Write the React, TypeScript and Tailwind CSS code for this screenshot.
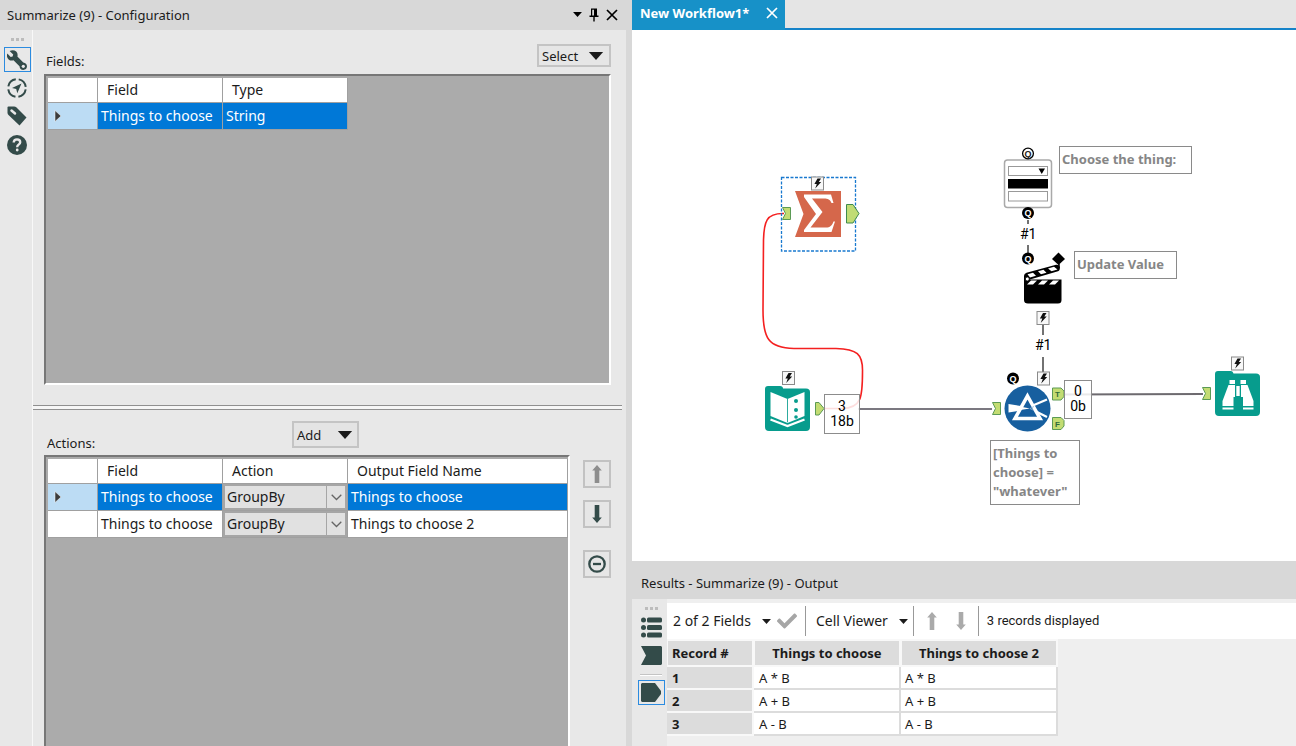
import React from "react";
import { FaCheck } from "react-icons/fa";

const dark = "#334b49";

function Caret({ className = "" }: { className?: string }) {
  return (
    <svg viewBox="0 0 16 9" className={className} aria-hidden="true">
      <path d="M0 0H16L8 9Z" fill="currentColor" />
    </svg>
  );
}

function BlockArrow({ down = false, className = "" }: { down?: boolean; className?: string }) {
  return (
    <svg viewBox="0 0 12 20" className={className} aria-hidden="true">
      <path
        d={down ? "M3.700 1H8.300V13.500H10.800L6 19L1.200 13.500H3.700Z" : "M3.700 19H8.300V6.500H10.800L6 1L1.200 6.500H3.700Z"}
        fill="currentColor"
      />
    </svg>
  );
}

function Grip() {
  return (
    <span className="flex gap-[2px]" aria-hidden="true">
      <i className="size-[3px] bg-[#bcbcbc]" />
      <i className="size-[3px] bg-[#bcbcbc]" />
      <i className="size-[3px] bg-[#bcbcbc]" />
    </span>
  );
}

/* Drawing primitives for the workflow tools */

function Bolt({ x, y }: { x: number; y: number }) {
  return (
    <g transform={`translate(${x} ${y})`}>
      <rect x="0.5" y="0.5" width="12" height="13" fill="#f8f8f8" stroke="#8a8a8a" />
      <path d="M6.5 2H10L7.8 5.4H10.2L4.2 12L5.8 7.4H3.4Z" fill="#111" />
    </g>
  );
}

function QDot({ x, y, hollow = false }: { x: number; y: number; hollow?: boolean }) {
  return (
    <g transform={`translate(${x} ${y})`}>
      <circle r={hollow ? 5.4 : 6} fill={hollow ? "#fff" : "#000"} stroke="#000" strokeWidth={hollow ? 1.3 : 0} />
      <text
        y="3"
        textAnchor="middle"
        fontSize="9"
        fontWeight="700"
        fontFamily="Liberation Sans, sans-serif"
        fill={hollow ? "#222" : "#fff"}
      >
        Q
      </text>
    </g>
  );
}

function InAnchor({ x, y }: { x: number; y: number }) {
  return (
    <path
      transform={`translate(${x} ${y})`}
      d="M0.5 0.5H8.5V12.5H0.5L3.5 6.5Z"
      fill="#c3dc72"
      stroke="#5c9a55"
    />
  );
}

function OutAnchor({ x, y, label }: { x: number; y: number; label: string }) {
  return (
    <g transform={`translate(${x} ${y})`}>
      <path d="M0.5 0.5H9L12 3.5V9L9 12.5H0.5Z" fill="#c3dc72" stroke="#5c9a55" />
      <text x="5.5" y="9.5" textAnchor="middle" fontSize="8" fontWeight="700" fontFamily="Liberation Sans, sans-serif" fill="#2f6b3a">
        {label}
      </text>
    </g>
  );
}

function Connectors() {
  return (
    <svg viewBox="632 30 664 531" className="absolute left-0 top-0 h-[531px] w-[664px]" fill="none" aria-hidden="true">
      <path d="M858 409H992" stroke="#7b7880" strokeWidth="2" />
      <path d="M1064 394.500L1203 394" stroke="#6d6a6f" strokeWidth="2" />
      <path d="M1028 220V224M1028 245V253M1043 325V335M1043 357V372" stroke="#444" strokeWidth="1.500" />
      <path
        d="M784 213.500C766 213 764 222 763.500 240L763 310C763 338 768 348 794 348.500H836C857 349 863 354 862.500 372C862.500 396 862 408 842 408.500H824"
        stroke="#f42020"
        strokeWidth="1.600"
      />
    </svg>
  );
}

function SummarizeTool() {
  return (
    <svg viewBox="780 176 82 77" className="absolute left-[148px] top-[146px] h-[77px] w-[82px]" role="img" aria-label="Summarize">
      <rect x="781.5" y="177.500" width="74" height="73.500" fill="none" stroke="#1879cf" strokeWidth="1.300" strokeDasharray="3 1.500" />
      <path d="M795 191H841V237H795L803.500 214Z" fill="#d5674b" />
      <path
        d="M804 194.500H831L833.500 203H831.500C830 199.500 828 198.500 824 198.500H812L822.500 212L810.500 227.500H826C830 227.500 832 225.500 833.500 221.500H835L831.500 232H804V230L816 214L804 197Z"
        fill="#fff"
      />
      <Bolt x={811} y={176.5} />
      <InAnchor x={782} y={207} />
      <path d="M846.500 204.500H853L859 213.500L853 223H846.500Z" fill="#c0dc74" stroke="#3f8a4e" />
    </svg>
  );
}

function TextInputTool() {
  return (
    <svg viewBox="764 370 62 63" className="absolute left-[132px] top-[340px] h-[63px] w-[62px]" role="img" aria-label="Text Input">
      <path d="M768 386H780Q783 386 783 388.500H806Q810 388.500 810 392V427Q810 431 806 431H769Q765 431 765 427V389Q765 386 768 386Z" fill="#079c8d" />
      <path d="M770.500 392L787.500 399V423L770.500 416Z" fill="#fff" />
      <path d="M804.500 392L787.500 399V423L804.500 416Z" fill="#fff" />
      <path d="M787.500 399V422" stroke="#079c8d" strokeWidth="0.800" />
      <path d="M770.500 417.500L787.500 424.500L804.500 417.500" fill="none" stroke="#079c8d" strokeWidth="1.200" />
      <path d="M770.500 419.500L787.500 426L804.500 419.500" fill="none" stroke="#fff" strokeWidth="2.200" />
      <circle cx="796" cy="401" r="2" fill="#079c8d" />
      <circle cx="796" cy="410" r="2" fill="#079c8d" />
      <circle cx="796" cy="417" r="1.800" fill="#079c8d" />
      <Bolt x={782} y={371} />
      <path d="M815.500 402.500H819L824 408.500L819 415H815.500Z" fill="#c3dc72" stroke="#5c9a55" />
    </svg>
  );
}

function DropDownTool() {
  return (
    <svg viewBox="1000 146 56 76" className="absolute left-[368px] top-[116px] h-[76px] w-[56px]" role="img" aria-label="Drop Down">
      <rect x="1004.500" y="160" width="47" height="47.500" rx="3" fill="#fff" stroke="#a9a9a9" strokeWidth="1.500" />
      <rect x="1008.500" y="166.500" width="39" height="9" fill="#fff" stroke="#999" />
      <path d="M1038.500 168.500H1045L1041.750 174Z" fill="#000" />
      <rect x="1008" y="179" width="40" height="9.500" fill="#000" />
      <rect x="1008.500" y="191.500" width="39" height="9.500" fill="#fff" stroke="#999" />
      <QDot x={1028} y={153.500} hollow />
      <QDot x={1028} y={213} />
    </svg>
  );
}

function ActionTool() {
  return (
    <svg viewBox="1018 250 50 78" className="absolute left-[386px] top-[220px] h-[78px] w-[50px]" role="img" aria-label="Action">
      <QDot x={1028} y={258.500} />
      <path d="M1058.500 252.500L1065 259L1058.500 265L1052 259Z" fill="#000" />
      <path d="M1024 280V276Q1024 273.500 1026.500 272.700L1056 264.700Q1059 264.300 1059.800 267Q1060.300 270.500 1058 271.200L1030 279.500V282H1024Z" fill="#000" />
      <path d="M1027.500 274.200L1033 272.700L1036 275.800L1030 277.400ZM1038 271.300L1043.500 269.700L1046.500 272.700L1041 274.300ZM1048 268.400L1054 266.700L1057.500 269.600L1051.500 271.200Z" fill="#fff" />
      <path d="M1059 264V268" stroke="#000" strokeWidth="1.500" />
      <path d="M1024 279.500H1061.500V300Q1061.500 303.500 1058 303.500H1028Q1024 303.500 1024 300Z" fill="#000" />
      <path d="M1031 280.500H1037L1033 284.500H1027ZM1042 280.500H1048L1044 284.500H1038ZM1053 280.500H1059L1055 284.500H1049Z" fill="#fff" />
      <circle cx="1027.300" cy="279" r="2" fill="#fff" stroke="#000" strokeWidth="0.800" />
      <Bolt x={1036.5} y={311} />
    </svg>
  );
}

function FilterTool() {
  return (
    <svg viewBox="990 370 76 64" className="absolute left-[358px] top-[340px] h-[64px] w-[76px]" role="img" aria-label="Filter">
      <circle cx="1027.500" cy="408.500" r="23" fill="#175f9f" />
      <path d="M1008.500 404V412.500L1030 409V407.500Z" fill="#fff" />
      <path d="M1034 405L1047 399.500M1035 411L1047 417" stroke="#fff" strokeWidth="2.200" />
      <path d="M1027.500 396L1040 418.500H1015Z" fill="#175f9f" stroke="#fff" strokeWidth="3.600" />
      <path d="M1017 406L1030 408.500L1017 410.500Z" fill="#fff" />
      <path d="M1030 408.500L1034 406.500M1030 408.500L1034 410.500" stroke="#8db4d6" strokeWidth="0.800" />
      <QDot x={1013} y={378.500} />
      <Bolt x={1037} y={371.500} />
      <InAnchor x={992} y={402} />
      <OutAnchor x={1052} y={387.500} label="T" />
      <OutAnchor x={1052} y={417} label="F" />
    </svg>
  );
}

function BrowseTool() {
  return (
    <svg viewBox="1200 355 62 63" className="absolute left-[568px] top-[325px] h-[63px] w-[62px]" role="img" aria-label="Browse">
      <path d="M1218 371H1231Q1233 371 1233.500 373.500H1256Q1260 373.500 1260 377V412Q1260 416 1256 416H1219Q1215 416 1215 412V374Q1215 371 1218 371Z" fill="#079c8d" />
      <path d="M1229.500 380H1235V384H1229.500ZM1240.500 380H1246V384H1240.500Z" fill="#fff" />
      <path d="M1228.500 385H1235V397H1233.500V406H1222.500V401Z" fill="#fff" />
      <path d="M1247.500 385H1241V397H1243V406H1253.500V401Z" fill="#fff" />
      <rect x="1236.300" y="386" width="3.400" height="10" fill="#fff" />
      <path d="M1222.500 408.500H1233.500M1243 408.500H1253.500" stroke="#fff" strokeWidth="2" />
      <Bolt x={1231} y={356.500} />
      <InAnchor x={1202} y={387} />
    </svg>
  );
}

function Note({ className, children }: { className: string; children: React.ReactNode }) {
  return (
    <p className={`absolute border border-[#8a8a8a] bg-white px-[2px] pt-[3px] text-[13px] font-bold leading-[19px] text-[#868686] ${className}`}>
      {children}
    </p>
  );
}

function Count({ className, rows, size }: { className: string; rows: string; size: string }) {
  return (
    <p className={`absolute border border-[#8c8c8c] bg-white/85 text-center font-[Roboto,sans-serif] text-sm leading-[15px] text-black ${className}`}>
      {rows}
      <br />
      {size}
    </p>
  );
}

function Canvas() {
  return (
    <main className="relative min-h-0 flex-1 overflow-hidden bg-white">
      <Connectors />
      <SummarizeTool />
      <TextInputTool />
      <DropDownTool />
      <ActionTool />
      <FilterTool />
      <BrowseTool />
      <Count className="left-[192px] top-[364px] h-[40px] w-[36px] pt-[4px]" rows="3" size="18b" />
      <Count className="left-[432px] top-[350px] h-[39px] w-[28px] pt-[3px]" rows="0" size="0b" />
      <span className="absolute left-[388px] top-[195px] font-[Roboto,sans-serif] text-sm leading-[18px] text-black">#1</span>
      <span className="absolute left-[403px] top-[306px] font-[Roboto,sans-serif] text-sm leading-[18px] text-black">#1</span>
      <Note className="left-[427px] top-[116px] h-[28px] w-[133px]">Choose the thing:</Note>
      <Note className="left-[442px] top-[221px] h-[28px] w-[103px]">Update Value</Note>
      <Note className="left-[358px] top-[410px] h-[65px] w-[90px]">
        [Things to
        <br />
        choose] =
        <br />
        "whatever"
      </Note>
    </main>
  );
}

function RowMark() {
  return (
    <svg viewBox="0 0 8 12" className="ml-[6px] h-3 w-2" aria-hidden="true">
      <path d="M1 0.500L7 6L1 11.500Z" fill="#3c3c3c" stroke="#fff" strokeWidth="0.500" />
    </svg>
  );
}

const head = "border-b border-r border-[#a0a0a0] bg-white px-[9px] text-left font-normal";
const cell = "border-b border-r border-[#a0a0a0] px-[3px]";

function FieldsPane() {
  return (
    <section className="flex h-[375px] flex-none flex-col pb-[20px] pl-[11px] pr-[15px] pt-[14px]">
      <div className="flex h-[30px] items-start justify-between">
        <h2 className="pl-[2px] pt-[8px] leading-[18px]">Fields:</h2>
        <button className="flex h-[23px] w-[74px] items-center justify-between border-2 border-[#c4c4c4] bg-[#e6e6e6] pl-[3px] pr-[5px]">
          Select
          <Caret className="h-[8px] w-[16px]" />
        </button>
      </div>
      <div className="flex-1 border-b-2 border-l-2 border-r-2 border-t-2 border-b-white border-l-[#777] border-r-white border-t-[#777] bg-[#ababab] pl-[2px] pt-[2px]">
        <table className="table-fixed border-separate border-spacing-0 text-sm leading-[18px]">
          <colgroup>
            <col className="w-[50px]" />
            <col className="w-[125px]" />
            <col className="w-[125px]" />
          </colgroup>
          <thead>
            <tr className="h-[25px]">
              <th className={head} aria-label="Selected row" />
              <th className={head}>Field</th>
              <th className={head}>Type</th>
            </tr>
          </thead>
          <tbody>
            <tr className="h-[27px]">
              <td className="border-b border-r border-[#a0a0a0] bg-[#bcdcf4]"><RowMark /></td>
              <td className={`${cell} bg-[#0078d7] text-white`}>Things to choose</td>
              <td className={`${cell} bg-[#0078d7] text-white`}>String</td>
            </tr>
          </tbody>
        </table>
      </div>
    </section>
  );
}

const actionRows = [
  { field: "Things to choose", action: "GroupBy", output: "Things to choose", selected: true },
  { field: "Things to choose", action: "GroupBy", output: "Things to choose 2", selected: false },
];

const sideButton = "flex size-[28px] items-center justify-center border-2 border-[#c2c2c2] bg-[#e6e6e6]";

function ActionsPane() {
  return (
    <section className="flex min-h-0 flex-1 flex-col pl-[11px] pr-[15px] pt-[11px]">
      <div className="flex h-[34px] flex-none items-start">
        <h2 className="w-[248px] pl-[3px] pt-[13px] leading-[18px]">Actions:</h2>
        <button className="flex h-[27px] w-[67px] items-center justify-between border-2 border-[#c4c4c4] bg-[#e4e4e4] pl-[3px] pr-[4px]">
          Add
          <Caret className="h-[8px] w-[16px]" />
        </button>
      </div>
      <div className="flex min-h-0 flex-1 justify-between">
        <div className="w-[526px] border-l-2 border-r-2 border-t-2 border-l-[#777] border-r-white border-t-[#777] bg-[#ababab] pl-[2px] pt-[2px]">
          <table className="w-full table-fixed border-separate border-spacing-0 text-sm leading-[18px]">
            <colgroup>
              <col className="w-[50px]" />
              <col className="w-[125px]" />
              <col className="w-[125px]" />
              <col />
            </colgroup>
            <thead>
              <tr className="h-[25px]">
                <th className={head} aria-label="Selected row" />
                <th className={head}>Field</th>
                <th className={head}>Action</th>
                <th className={head}>Output Field Name</th>
              </tr>
            </thead>
            <tbody>
              {actionRows.map((row) => {
                const tone = row.selected ? "bg-[#0078d7] text-white" : "bg-white";
                return (
                  <tr key={row.output} className="h-[27px]">
                    <td className={`border-b border-r border-[#a0a0a0] ${row.selected ? "bg-[#bcdcf4]" : "bg-white"}`}>
                      {row.selected && <RowMark />}
                    </td>
                    <td className={`${cell} ${tone}`}>{row.field}</td>
                    <td className="border-b border-r border-[#a0a0a0] bg-[#e1e1e1] p-0">
                      <div className="relative h-[26px] border-2 border-[#a6a6a6]">
                        <select
                          aria-label={`Action for ${row.output}`}
                          defaultValue={row.action}
                          className="block h-full w-full appearance-none bg-transparent pl-[2px]"
                        >
                          <option>GroupBy</option>
                        </select>
                        <span className="pointer-events-none absolute inset-y-0 right-0 flex w-[19px] items-center justify-center border-l border-[#a6a6a6]">
                          <svg viewBox="0 0 11 7" className="h-[7px] w-[11px]" fill="none" aria-hidden="true">
                            <path d="M0.700 0.700L5.500 5.500L10.300 0.700" stroke="#666" strokeWidth="1.300" />
                          </svg>
                        </span>
                      </div>
                    </td>
                    <td className={`${cell} ${tone}`}>{row.output}</td>
                  </tr>
                );
              })}
            </tbody>
          </table>
        </div>
        <div className="flex flex-col gap-[12px] pt-[5px]">
          <button aria-label="Move up" className={`${sideButton} text-[#8d8d8d]`}>
            <BlockArrow className="h-[20px] w-[12px]" />
          </button>
          <button aria-label="Move down" className={`${sideButton} text-[#334b49]`}>
            <BlockArrow down className="h-[20px] w-[12px]" />
          </button>
          <button aria-label="Remove" className={`${sideButton} mt-[10px]`}>
            <svg viewBox="0 0 18 18" className="size-[18px]" fill="none" stroke={dark} strokeWidth="2.300">
              <circle cx="9" cy="9" r="7.700" />
              <path d="M5 9H13" />
            </svg>
          </button>
        </div>
      </div>
    </section>
  );
}

function ToolStrip() {
  return (
    <nav className="flex w-[33px] flex-none flex-col items-center border-r border-[#f8f8f8] pl-[2px] pt-[8px]">
      <Grip />
      <button aria-label="Configuration" className="mt-[6px] flex h-[25px] w-[27px] items-center justify-center border border-[#2b8be0]">
        <svg viewBox="0 0 20 20" className="size-[20px]">
          <path
            d="M2.600 0.900L6.200 4.500L5.600 6.600L3.700 7L0.300 3.600Q-0.800 7.200 1.600 9.400Q3.700 11.200 6.500 10.300L12.500 16.300Q12.800 19.800 16.300 20Q19.800 19.700 20 16.300Q19.700 12.900 16.300 12.500L10.400 6.600Q11.200 3.600 9.200 1.500Q6.500 -0.900 2.600 0.900Z"
            fill={dark}
          />
          <circle cx="16.300" cy="16.300" r="1.600" fill="#e8e8e8" />
        </svg>
      </button>
      <button aria-label="Navigation" className="mt-[6px]">
        <svg viewBox="0 0 20 20" className="size-[20px]" fill="none">
          <circle cx="10" cy="10" r="8.800" stroke={dark} strokeWidth="2" strokeDasharray="10.800 3.023" strokeDashoffset="-1.500" />
          <path d="M14.500 5.500L5 10L9.200 11L10.300 15.200Z" fill={dark} />
        </svg>
      </button>
      <button aria-label="Annotation" className="mt-[8px]">
        <svg viewBox="0 0 20 20" className="size-[20px]">
          <path d="M0.500 1.500Q0.500 0.500 1.500 0.500H7Q8.500 0.500 9.500 1.500L19.500 11.500L12.500 19.500L1.500 9Q0.500 8 0.500 6.500Z" fill={dark} />
          <path d="M4.500 4.500L8 7.500" stroke="#e8e8e8" strokeWidth="2.500" strokeLinecap="round" />
        </svg>
      </button>
      <button aria-label="Help" className="mt-[9px]">
        <svg viewBox="0 0 20 20" className="size-[20px]">
          <circle cx="10" cy="10" r="10" fill={dark} />
          <path d="M6.700 7.500Q6.900 4.400 10 4.400Q13.200 4.500 13.200 7.200Q13.200 8.800 11.500 9.800Q10.200 10.600 10.200 12.200" fill="none" stroke="#e8e8e8" strokeWidth="2.400" />
          <circle cx="10.200" cy="15" r="1.400" fill="#e8e8e8" />
        </svg>
      </button>
    </nav>
  );
}

function ConfigurationPanel() {
  return (
    <aside className="flex w-[626px] flex-none flex-col bg-[#e8e8e8]">
      <header className="flex h-[30px] flex-none items-center justify-between bg-[#d8d8d8] pb-px pl-[7px] pr-[8px]">
        <h1>Summarize (9) - Configuration</h1>
        <div className="flex items-center gap-[7px] text-black">
          <button aria-label="Window menu"><Caret className="h-[5px] w-[9px]" /></button>
          <button aria-label="Pin">
            <svg viewBox="0 0 10 14" className="h-[14px] w-[10px]">
              <path d="M2 0.500H8V7.500H9.500V9H5.700V13.500H4.300V9H0.500V7.500H2ZM3.200 1.700V7.500H5V1.700Z" fill="#000" fillRule="evenodd" />
            </svg>
          </button>
          <button aria-label="Close panel">
            <svg viewBox="0 0 12 12" className="size-[12px]">
              <path d="M1 1L11 11M11 1L1 11" stroke="#000" strokeWidth="1.700" />
            </svg>
          </button>
        </div>
      </header>
      <div className="flex min-h-0 flex-1">
        <ToolStrip />
        <div className="flex min-w-0 flex-1 flex-col">
          <FieldsPane />
          <div className="mr-[4px] h-[5px] flex-none border-y border-[#8f8f8f] bg-[#f6f6f6]" />
          <ActionsPane />
        </div>
      </div>
    </aside>
  );
}

const records = [
  ["1", "A * B", "A * B"],
  ["2", "A + B", "A + B"],
  ["3", "A - B", "A - B"],
];

function ResultsPanel() {
  return (
    <section className="flex h-[180px] flex-none flex-col bg-[#efefef]">
      <h2 className="flex h-[33px] flex-none items-center bg-[#d8d8d8] pl-[9px]">Results - Summarize (9) - Output</h2>
      <div className="flex min-h-0 flex-1">
        <nav className="flex w-[35px] flex-none flex-col items-center bg-[#e8e8e8] pl-[3px] pt-[8px]">
          <Grip />
          <button aria-label="Messages" className="mt-[7px]">
            <svg viewBox="0 0 21 21" className="size-[21px]" fill={dark}>
              <circle cx="2.500" cy="3" r="2.500" />
              <circle cx="2.500" cy="10.500" r="2.500" />
              <circle cx="2.500" cy="18" r="2.500" />
              <rect x="6" y="0.500" width="15" height="5" rx="1.500" />
              <rect x="6" y="8" width="15" height="5" rx="1.500" />
              <rect x="6" y="15.500" width="15" height="5" rx="1.500" />
            </svg>
          </button>
          <button aria-label="Input data" className="mt-[8px]">
            <svg viewBox="0 0 21 19" className="h-[19px] w-[21px]">
              <path d="M0 0H20L21 1V18L20 19H0L5 9.500Z" fill={dark} />
            </svg>
          </button>
          <i className="mt-[9px] h-[2px] w-[22px] border-b border-white bg-[#c4c4c4]" />
          <button aria-label="Output data" className="mt-[4px] flex h-[25px] w-[27px] items-center border border-[#2b8be0] pl-[2px]">
            <svg viewBox="0 0 20 19" className="h-[19px] w-[20px]">
              <path d="M0 1L1 0H14L20 8V11L14 19H1L0 18Z" fill={dark} />
            </svg>
          </button>
        </nav>
        <div className="flex min-w-0 flex-1 flex-col pt-[4px]">
          <div className="flex h-[36px] flex-none items-center bg-white text-[14px]">
            <button className="flex items-center gap-[11px] pl-[6px]">
              2 of 2 Fields
              <Caret className="h-[5px] w-[9px]" />
            </button>
            <button aria-label="Apply" className="ml-[6px]"><FaCheck className="size-[20px] text-[#a6a6a6]" /></button>
            <i className="ml-[8px] h-[30px] w-px bg-[#999]" />
            <button className="flex items-center gap-[11px] pl-[10px]">
              Cell Viewer
              <Caret className="h-[5px] w-[9px]" />
            </button>
            <i className="ml-[5px] h-[30px] w-px bg-[#999]" />
            <button aria-label="Previous record" className="ml-[12px] text-[#aaa]"><BlockArrow className="h-[20px] w-[12px]" /></button>
            <button aria-label="Next record" className="ml-[17px] text-[#aaa]"><BlockArrow down className="h-[20px] w-[12px]" /></button>
            <i className="ml-[11px] h-[30px] w-px bg-[#999]" />
            <span className="pl-[8px] font-[Roboto,sans-serif] text-[13px]">3 records displayed</span>
          </div>
          <table className="w-[391px] table-fixed border-separate border-spacing-0 text-[13px]">
            <colgroup>
              <col className="w-[87px]" />
              <col className="w-[147px]" />
              <col className="w-[157px]" />
            </colgroup>
            <thead>
              <tr className="h-[28px]">
                <th className="border-2 border-l border-[#f8f8f8] bg-[#dcdcdc] px-[4px] text-left font-bold">Record #</th>
                <th className="border-2 border-l border-[#f8f8f8] bg-[#dcdcdc] font-bold">Things to choose</th>
                <th className="border-2 border-l border-[#f8f8f8] bg-[#dcdcdc] font-bold">Things to choose 2</th>
              </tr>
            </thead>
            <tbody>
              {records.map(([id, first, second]) => (
                <tr key={id} className="h-[23px]">
                  <th className="border-b-2 border-r-2 border-[#f8f8f8] bg-[#dcdcdc] px-[5px] text-left font-bold leading-[18px]">{id}</th>
                  <td className="border-b-2 border-r-2 border-[#dcdcdc] bg-white px-[5px] leading-[18px]">{first}</td>
                  <td className="border-b-2 border-r-2 border-[#dcdcdc] bg-white px-[4px] leading-[18px]">{second}</td>
                </tr>
              ))}
            </tbody>
          </table>
        </div>
      </div>
    </section>
  );
}

export default function App() {
  return (
    <div className="flex h-screen gap-[6px] overflow-hidden bg-[#d8d8d8] font-['Noto_Sans','Open_Sans',sans-serif] text-[13px] leading-[18px] text-[#1b1b1b]">
      <ConfigurationPanel />
      <div className="flex min-w-0 flex-1 flex-col">
        <div className="flex h-[30px] flex-none border-b-2 border-[#1583c9] bg-[#e5e5e5]">
          <div className="flex h-[30px] w-[153px] items-center justify-between bg-[#1791c8] pb-[4px] pl-[8px] pr-[7px] font-bold text-white">
            New Workflow1*
            <button aria-label="Close tab">
              <svg viewBox="0 0 12 12" className="size-[12px]">
                <path d="M1 1L11 11M11 1L1 11" stroke="#fff" strokeWidth="1.700" />
              </svg>
            </button>
          </div>
        </div>
        <Canvas />
        <div className="h-[5px] flex-none" />
        <ResultsPanel />
      </div>
    </div>
  );
}
